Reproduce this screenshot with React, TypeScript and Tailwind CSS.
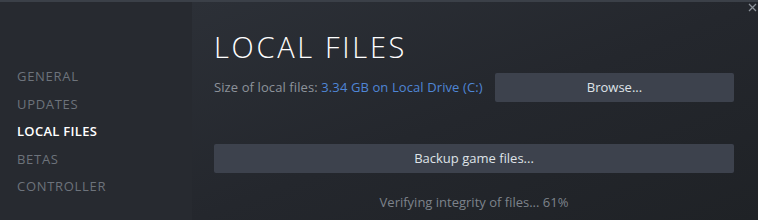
import React from 'react';

const navItems = ['GENERAL', 'UPDATES', 'LOCAL FILES', 'BETAS', 'CONTROLLER'];

export default function App() {
  return (
    <div className="w-[758px] h-[220px] overflow-hidden flex flex-col bg-[#22252a] font-['Open_Sans',sans-serif]">
      {/* top edge */}
      <div className="h-[2px] bg-[#3b4048] shrink-0" />
      <div className="flex flex-1 min-h-0">
        {/* Sidebar */}
        <div className="w-[192px] shrink-0 bg-[#272a30] pt-[65px] pl-[17px] flex flex-col gap-[9px]">
          {navItems.map((item) => (
            <div
              key={item}
              className={`text-[13px] leading-[18.5px] ${
                item === 'LOCAL FILES'
                  ? 'text-white font-semibold tracking-[0.3px]'
                  : 'text-[#6d737b] tracking-[0.7px]'
              }`}
            >
              {item}
            </div>
          ))}
        </div>

        {/* Main panel */}
        <div className="relative flex-1 bg-gradient-to-br from-[#2c3037] via-[#24272d] to-[#1f2226] pl-[22px] pr-[24px]">
          <button className="absolute top-[1px] right-[1px] text-[#8b9199]" aria-label="Close">
            <svg width="9" height="9" viewBox="0 0 9 9" fill="none" stroke="currentColor" strokeWidth="1.3">
              <path d="M1 1L8 8M8 1L1 8" />
            </svg>
          </button>
          <h1 className="mt-[27px] text-[29px] leading-[36px] font-light text-white tracking-[2.7px]">
            LOCAL FILES
          </h1>
          <div className="mt-[8px] flex items-center">
            <div className="w-[281px] text-[13px] text-[#8d939b] tracking-[0.1px]">
              Size of local files: <span className="text-[#4f86d6]">3.34 GB on Local Drive (C:)</span>
            </div>
            <button className="w-[239px] h-[29px] bg-[#3d424d] text-[#dfe3e8] text-[13px] rounded-[2px]">
              Browse...
            </button>
          </div>
          <button className="mt-[42px] w-[520px] h-[29px] bg-[#3d424d] text-[#dfe3e8] text-[13px] rounded-[2px]">
            Backup game files...
          </button>
          <div className="w-[520px] mt-[20px] text-center text-[13px] text-[#7d838b]">
            Verifying integrity of files... 61%
          </div>
        </div>
      </div>
    </div>
  );
}
